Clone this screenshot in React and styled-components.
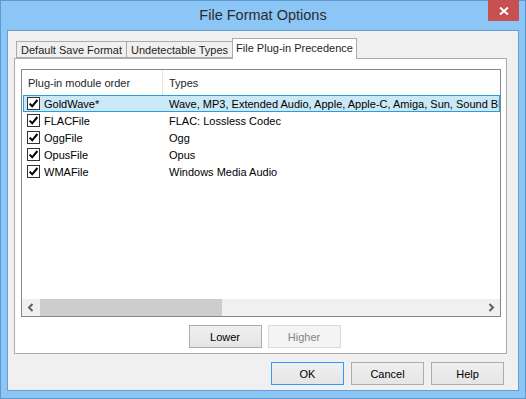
import React from 'react';
import styled, { createGlobalStyle } from 'styled-components';

const Global = createGlobalStyle`
  html, body { margin: 0; padding: 0; }
  body {
    width: 526px; height: 399px; overflow: hidden;
    font-family: "Liberation Sans", Arial, sans-serif;
    font-size: 11px; color: #000;
  }
  * { box-sizing: border-box; }
`;

const Window = styled.div`
  width: 526px;
  height: 399px;
  background: #8bc6f7;
  box-shadow: inset 0 0 0 1px #5f97cf;
  display: flex;
  flex-direction: column;
  padding: 0 7px 8px;
`;

const TitleBar = styled.div`
  height: 30px;
  flex: none;
  display: grid;
  grid-template-columns: 1fr auto 1fr;
`;

const Title = styled.div`
  grid-column: 2;
  font-size: 14.5px;
  line-height: 30px;
  color: #2b2b2b;
  white-space: nowrap;
`;

const CloseButton = styled.div`
  grid-column: 3;
  justify-self: end;
  width: 31px;
  height: 21px;
  background: #c75050;
  display: flex;
  align-items: center;
  justify-content: center;
`;

const Client = styled.div`
  flex: 1;
  border: 1px solid #6a9dd2;
  background: #f0f0f0;
  display: flex;
  flex-direction: column;
  padding: 7px 0 5px;
`;

const TabArea = styled.div`
  margin: 0 11px 0 6px;
  display: flex;
  flex-direction: column;
`;

const TabStrip = styled.div`
  display: flex;
  align-items: flex-end;
  padding-left: 2px;
  height: 21px;
  margin-bottom: -1px;
  position: relative;
  z-index: 1;
`;

const Tab = styled.div`
  height: ${p => (p.$active ? 21 : 17)}px;
  width: ${p => p.$w}px;
  margin-left: ${p => (p.$first ? 0 : -1)}px;
  border: 1px solid #acacac;
  border-bottom: ${p => (p.$active ? 'none' : '1px solid #acacac')};
  background: ${p => (p.$active ? '#fff' : '#f0f0f0')};
  display: flex;
  align-items: center;
  justify-content: center;
  padding-bottom: ${p => (p.$active ? 3 : 0)}px;
  white-space: nowrap;
  margin-bottom: ${p => (p.$active ? 0 : 1)}px;
  color: #1e1e1e;
`;

const Panel = styled.div`
  height: 296px;
  background: #fff;
  border: 1px solid #acacac;
  padding: 10px 5px 5px 6px;
  display: flex;
  flex-direction: column;
`;

const List = styled.div`
  height: 248px;
  border: 1px solid #828790;
  background: #fff;
  display: flex;
  flex-direction: column;
  overflow: hidden;
`;

const HeaderRow = styled.div`
  height: 25px;
  display: flex;
  flex: none;
`;

const HeaderCell = styled.div`
  width: ${p => (p.$w ? `${p.$w}px` : 'auto')};
  flex: ${p => (p.$w ? 'none' : '1')};
  border-right: ${p => (p.$w ? '1px solid #e5e5e5' : 'none')};
  padding-left: 6px;
  display: flex;
  align-items: center;
  white-space: nowrap;
  color: #1e1e1e;
`;

const Row = styled.div`
  height: 17px;
  display: flex;
  align-items: center;
  flex: none;
  margin: 0 0 0 1px;
  border: 1px solid ${p => (p.$selected ? '#26a0da' : 'transparent')};
  background: ${p => (p.$selected ? '#cbe8f6' : 'transparent')};
  white-space: nowrap;
  overflow: hidden;
`;

const NameCell = styled.div`
  width: 139px;
  flex: none;
  display: flex;
  align-items: center;
  gap: 4px;
  padding-left: 3px;
`;

const TypeCell = styled.div`
  padding-left: 6px;
  white-space: nowrap;
`;

const Box = styled.div`
  width: 13px;
  height: 13px;
  border: 1px solid #333;
  background: #fff;
  display: flex;
  align-items: center;
  justify-content: center;
  flex: none;
`;

const Spacer = styled.div`
  flex: 1;
`;

const HScroll = styled.div`
  height: 17px;
  flex: none;
  background: #f0f0f0;
  display: flex;
  align-items: stretch;
`;

const Arrow = styled.div`
  width: 17px;
  display: flex;
  align-items: center;
  justify-content: center;
  flex: none;
`;

const Track = styled.div`
  flex: 1;
  display: flex;
  padding-left: 1px;
`;

const Thumb = styled.div`
  background: #cdcdcd;
`;

const PanelButtons = styled.div`
  display: flex;
  justify-content: center;
  gap: 6px;
  margin-top: 8px;
  padding-left: 7px;
`;

const Button = styled.div`
  width: 73px;
  height: 23px;
  display: flex;
  align-items: center;
  justify-content: center;
  border: 1px solid ${p => (p.$default ? '#3399ff' : p.$disabled ? '#d9d9d9' : '#acacac')};
  background: ${p => (p.$disabled ? '#f4f4f4' : 'linear-gradient(#f0f0f0, #e5e5e5)')};
  color: ${p => (p.$disabled ? '#838383' : '#000')};
`;

const DialogButtons = styled.div`
  display: flex;
  justify-content: flex-end;
  gap: 7px;
  margin-top: 8px;
  padding-right: 14px;
`;

const Check = () => (
  <svg width="11" height="11" viewBox="0 0 11 11">
    <path d="M1.6 5.6 L4.2 8.3 L9.4 2" fill="none" stroke="#000" strokeWidth="2" />
  </svg>
);

const rows = [
  { name: 'GoldWave*', types: 'Wave, MP3, Extended Audio, Apple, Apple-C, Amiga, Sun, Sound Blaster', selected: true },
  { name: 'FLACFile', types: 'FLAC: Lossless Codec' },
  { name: 'OggFile', types: 'Ogg' },
  { name: 'OpusFile', types: 'Opus' },
  { name: 'WMAFile', types: 'Windows Media Audio' },
];

export default function App() {
  return (
    <>
      <Global />
      <Window>
        <TitleBar>
          <Title>File Format Options</Title>
          <CloseButton>
            <svg width="10" height="8" viewBox="0 0 10 8">
              <path d="M1 0.5 L9 7.5 M9 0.5 L1 7.5" stroke="#fff" strokeWidth="2" />
            </svg>
          </CloseButton>
        </TitleBar>
        <Client>
          <TabArea>
            <TabStrip>
              <Tab $first $w={111}>Default Save Format</Tab>
              <Tab $w={107}>Undetectable Types</Tab>
              <Tab $active $w={125}>File Plug-in Precedence</Tab>
            </TabStrip>
            <Panel>
              <List>
                <HeaderRow>
                  <HeaderCell $w={141}>Plug-in module order</HeaderCell>
                  <HeaderCell>Types</HeaderCell>
                </HeaderRow>
                {rows.map(r => (
                  <Row key={r.name} $selected={r.selected}>
                    <NameCell>
                      <Box><Check /></Box>
                      {r.name}
                    </NameCell>
                    <TypeCell>{r.types}</TypeCell>
                  </Row>
                ))}
                <Spacer />
                <HScroll>
                  <Arrow>
                    <svg width="7" height="9" viewBox="0 0 7 9">
                      <path d="M5.5 1 L2 4.5 L5.5 8" fill="none" stroke="#606060" strokeWidth="2" />
                    </svg>
                  </Arrow>
                  <Track>
                    <Thumb style={{ width: 182 }} />
                  </Track>
                  <Arrow>
                    <svg width="7" height="9" viewBox="0 0 7 9">
                      <path d="M1.5 1 L5 4.5 L1.5 8" fill="none" stroke="#606060" strokeWidth="2" />
                    </svg>
                  </Arrow>
                </HScroll>
              </List>
              <PanelButtons>
                <Button>Lower</Button>
                <Button $disabled>Higher</Button>
              </PanelButtons>
            </Panel>
          </TabArea>
          <DialogButtons>
            <Button $default>OK</Button>
            <Button>Cancel</Button>
            <Button>Help</Button>
          </DialogButtons>
        </Client>
      </Window>
    </>
  );
}
